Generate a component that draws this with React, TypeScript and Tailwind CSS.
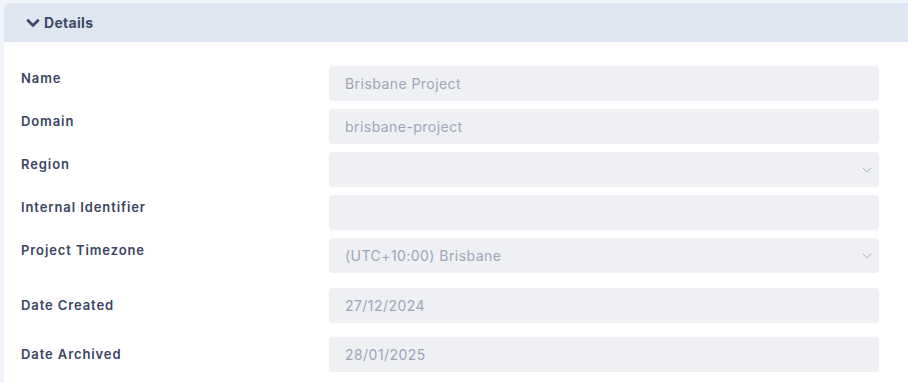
import { ChevronDown } from 'lucide-react';

const fields = [
  { label: 'Name', value: 'Brisbane Project' },
  { label: 'Domain', value: 'brisbane-project' },
  { label: 'Region', value: '', select: true },
  { label: 'Internal Identifier', value: '' },
  { label: 'Project Timezone', value: '(UTC+10:00) Brisbane', select: true },
];

const dates = [
  { label: 'Date Created', value: '27/12/2024' },
  { label: 'Date Archived', value: '28/01/2025' },
];

function Field({ value, select }: { value: string; select?: boolean }) {
  return (
    <div className="flex-1 h-[35px] rounded-[4px] bg-[#eef0f4] flex items-center justify-between pl-4 pr-[4px] text-[14px] tracking-[0.45px] text-[#9ea6b8]">
      <span>{value}</span>
      {select && <ChevronDown size={16} strokeWidth={1.4} className="text-[#a4abbb]" />}
    </div>
  );
}

export default function App() {
  return (
    <div
      className="w-[908px] h-[383px] bg-[#f1f4fb] pt-[3px] pl-[4px] overflow-hidden"
      style={{ fontFamily: 'Inter, "Open Sans", sans-serif' }}
    >
      <div className="bg-white rounded-tl-[6px] h-[380px] overflow-hidden">
        <div className="h-[39px] bg-[#e0e6f1] flex items-center pl-[19px] gap-[1px] text-[#3b4a66]">
          <ChevronDown size={20} strokeWidth={3.2} />
          <span className="text-[14px] font-bold tracking-[0.3px]">Details</span>
        </div>

        <div className="pt-[24px] pr-[29px] pl-[17px]">
          <div className="flex flex-col gap-[8px]">
            {fields.map(f => (
              <div key={f.label} className="flex items-start">
                <div className="w-[308px] pt-[3px] text-[13px] font-semibold tracking-[0.9px] text-[#3a465f]">{f.label}</div>
                <Field value={f.value} select={f.select} />
              </div>
            ))}
          </div>
          <div className="flex flex-col gap-[14px] mt-[15px]">
            {dates.map(f => (
              <div key={f.label} className="flex items-center">
                <div className="w-[308px] text-[13px] font-semibold tracking-[0.9px] text-[#3a465f]">{f.label}</div>
                <Field value={f.value} />
              </div>
            ))}
          </div>
        </div>
      </div>
    </div>
  );
}
